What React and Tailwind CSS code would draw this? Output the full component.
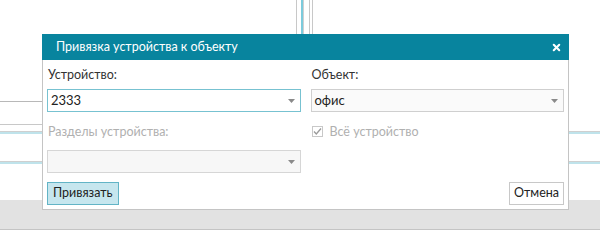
import React from 'react';
import { X } from 'lucide-react';

const Arrow = () => (
  <svg width="7" height="4" viewBox="0 0 7 4" className="shrink-0">
    <path d="M0 0h7L3.5 4z" fill="#8a8a8a" />
  </svg>
);

const Select = ({ value, focused, disabled }) => (
  <div
    className={`flex h-[23px] items-center justify-between pl-[3px] pr-[5px] border ${
      focused ? 'border-[#77c2d1] bg-white' : disabled ? 'border-[#d6d6d6] bg-[#f7f7f7]' : 'border-[#cfcfcf] bg-[#fafafa]'
    }`}
  >
    <span className="text-[13px] text-[#222]">{value}</span>
    <Arrow />
  </div>
);

const App = () => {
  return (
    <div
      className="relative w-[600px] h-[246px] bg-white overflow-hidden"
      style={{ fontFamily: 'Lato, "Open Sans", sans-serif' }}
    >
      {/* background page */}
      <div className="flex h-[34px]">
        <div className="w-[296px]" />
        <div className="w-px bg-[#c8c8c8]" />
        <div className="w-[4px]" />
        <div className="w-[2px] bg-[#7ccbdc]" />
        <div className="w-px bg-[#d0d0d0]" />
        <div className="w-[5px]" />
        <div className="w-px bg-[#c8c8c8]" />
        <div className="w-[2px]" />
        <div className="w-px bg-[#c8c8c8]" />
      </div>
      <div className="h-[67px]" />
      <div className="h-px w-[42px] bg-[#b8b8b8]" />
      <div className="h-[22px]" />
      <div className="h-px w-[42px] bg-[#c8c8c8]" />
      <div className="h-[6px]" />
      <div className="h-px bg-[#cfcfcf]" />
      <div className="h-[2px] bg-[#bfe3eb]" />
      <div className="h-[27px]" />
      <div className="h-px bg-[#cfcfcf]" />
      <div className="h-[2px] bg-[#bfe3eb]" />
      <div className="h-[36px]" />
      <div className="h-[30px] bg-[#e2e2e2] border-b border-[#c4c4c4]" />

      {/* dialog */}
      <div className="absolute left-[42px] top-[34px] w-[527px] h-[176px] bg-white border border-[#c4c4c4] border-t-0 flex flex-col">
        <div className="h-[26px] bg-[#08849e] flex items-center justify-between pl-[14px] pr-[7px] -mx-px">
          <span className="text-[12.5px] text-white">Привязка устройства к объекту</span>
          <X className="w-[11px] h-[11px] text-white" strokeWidth={4.5} />
        </div>
        <div className="flex-1 flex flex-col px-[4px] pb-[4px]">
          <div className="grid grid-cols-2 gap-x-[10px]">
            <div className="flex flex-col">
              <div className="pt-[6px] pl-[1px] h-[29px] text-[12.5px] text-[#333]">Устройство:</div>
              <Select value="2333" focused />
              <div className="pt-[11px] pl-[1px] h-[38px] text-[12.5px] text-[#b0b0b0]">Разделы устройства:</div>
              <Select value="" disabled />
            </div>
            <div className="flex flex-col">
              <div className="pt-[6px] pl-[1px] h-[29px] text-[12.5px] text-[#333]">Объект:</div>
              <Select value="офис" />
              <div className="pt-[11px] pl-[1px] flex items-start gap-[7px]">
                <div className="mt-[3px] w-[11px] h-[11px] border border-[#c8c8c8] bg-white flex items-center justify-center">
                  <svg width="9" height="9" viewBox="0 0 9 9">
                    <path d="M1 4.5l2.3 2.5L8 1.5" fill="none" stroke="#9a9a9a" strokeWidth="1.3" />
                  </svg>
                </div>
                <span className="text-[12.5px] text-[#b0b0b0]">Всё устройство</span>
              </div>
            </div>
          </div>
          <div className="mt-auto flex justify-between items-end">
            <button className="h-[23px] px-[5px] bg-[#c6e6ee] border border-[#62b4c6] text-[12.5px] text-[#222]">
              Привязать
            </button>
            <button className="h-[23px] px-[4px] bg-white border border-[#c8c8c8] text-[12.5px] text-[#222]">
              Отмена
            </button>
          </div>
        </div>
      </div>
    </div>
  );
};

export default App;
